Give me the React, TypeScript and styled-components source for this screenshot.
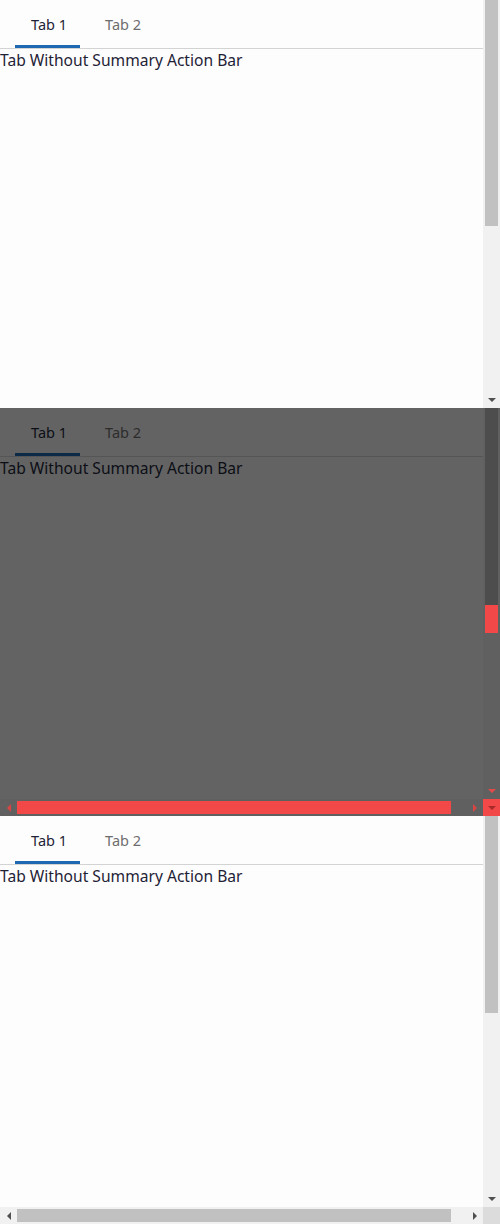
import React from "react";
import styled, { createGlobalStyle, css } from "styled-components";

const Global = createGlobalStyle`
  html, body { margin: 0; padding: 0; background: #fdfdfd; }
  body { font-family: "Noto Sans", "Open Sans", sans-serif; }
  * { box-sizing: border-box; }
`;

type Tone = "light" | "dim";

const palette = {
  light: {
    bg: "#fdfdfd",
    active: "#1f2236",
    inactive: "#6d6d6d",
    underline: "#1f69b3",
    border: "#d3d3d3",
    text: "#1f2236",
    track: "#f1f1f1",
    thumb: "#c1c1c1",
    arrow: "#505050",
    corner: "#dcdcdc",
  },
  dim: {
    bg: "#636363",
    active: "#0c0e16",
    inactive: "#2c2c2c",
    underline: "#0c2a48",
    border: "#555555",
    text: "#0c0e16",
    track: "#606060",
    thumb: "#4d4d4d",
    arrow: "#e24a4a",
    corner: "#f24848",
  },
};

const RED = "#f24848";

const Page = styled.div`
  display: flex;
  flex-direction: column;
  width: 500px;
`;

const Frame = styled.section<{ $tone: Tone; $hbar: boolean }>`
  display: grid;
  grid-template-columns: 483px 17px;
  grid-template-rows: ${(p) => (p.$hbar ? "391px 17px" : "408px")};
  height: 408px;
  background: ${(p) => palette[p.$tone].bg};
`;

const Viewport = styled.div`
  display: flex;
  flex-direction: column;
  overflow: hidden;
`;

const TabList = styled.div<{ $tone: Tone }>`
  display: flex;
  gap: 9px;
  padding-left: 15px;
  border-bottom: 1px solid ${(p) => palette[p.$tone].border};
  height: 49px;
`;

const Tab = styled.div<{ $tone: Tone; $active?: boolean }>`
  display: flex;
  align-items: center;
  justify-content: center;
  height: 48px;
  padding: 3px 13px 0 16px;
  font-size: 14.5px;
  color: ${(p) => (p.$active ? palette[p.$tone].active : palette[p.$tone].inactive)};
  border-bottom: 3px solid
    ${(p) => (p.$active ? palette[p.$tone].underline : "transparent")};
`;

const Body = styled.div<{ $tone: Tone }>`
  font-size: 15.6px;
  line-height: 22px;
  color: ${(p) => palette[p.$tone].text};
  white-space: nowrap;
`;

const VBar = styled.div<{ $tone: Tone }>`
  display: flex;
  flex-direction: column;
  background: ${(p) => palette[p.$tone].track};
`;

const VThumbArea = styled.div`
  flex: 1;
  display: flex;
  flex-direction: column;
  padding: 0 2px;
`;

const Segment = styled.div<{ $color: string; $h: number }>`
  height: ${(p) => p.$h}px;
  flex: none;
  background: ${(p) => p.$color};
`;

const Button = styled.div`
  width: 17px;
  height: 17px;
  flex: none;
  display: flex;
  align-items: center;
  justify-content: center;
`;

const arrowBase = css`
  width: 0;
  height: 0;
`;

const DownArrow = styled.span<{ $color: string }>`
  ${arrowBase};
  border-left: 4px solid transparent;
  border-right: 4px solid transparent;
  border-top: 4px solid ${(p) => p.$color};
  margin-top: 1px;
`;

const LeftArrow = styled.span<{ $color: string }>`
  ${arrowBase};
  border-top: 4px solid transparent;
  border-bottom: 4px solid transparent;
  border-right: 4px solid ${(p) => p.$color};
`;

const RightArrow = styled.span<{ $color: string }>`
  ${arrowBase};
  border-top: 4px solid transparent;
  border-bottom: 4px solid transparent;
  border-left: 4px solid ${(p) => p.$color};
`;

const HBar = styled.div<{ $tone: Tone }>`
  display: flex;
  align-items: center;
  background: ${(p) => palette[p.$tone].track};
`;

const HThumb = styled.div<{ $color: string }>`
  width: 434px;
  height: 13px;
  background: ${(p) => p.$color};
`;

const HSpacer = styled.div`
  flex: 1;
`;

const Corner = styled.div<{ $bg: string }>`
  display: flex;
  align-items: center;
  justify-content: center;
  background: ${(p) => p.$bg};
`;

type PanelProps = {
  tone: Tone;
  hbar: boolean;
  thumb: { color: string; h: number }[];
  red?: boolean;
};

function Panel({ tone, hbar, thumb, red }: PanelProps) {
  const c = palette[tone];
  return (
    <Frame $tone={tone} $hbar={hbar}>
      <Viewport>
        <TabList $tone={tone}>
          <Tab $tone={tone} $active>
            Tab 1
          </Tab>
          <Tab $tone={tone}>Tab 2</Tab>
        </TabList>
        <Body $tone={tone}>Tab Without Summary Action Bar</Body>
      </Viewport>
      <VBar $tone={tone}>
        <VThumbArea>
          {thumb.map((s, i) => (
            <Segment key={i} $color={s.color} $h={s.h} />
          ))}
        </VThumbArea>
        <Button>
          <DownArrow $color={c.arrow} />
        </Button>
      </VBar>
      {hbar && (
        <>
          <HBar $tone={tone}>
            <Button>
              <LeftArrow $color={red ? "#d94545" : c.arrow} />
            </Button>
            <HThumb $color={red ? RED : c.thumb} />
            <HSpacer />
            <Button>
              <RightArrow $color={red ? "#d94545" : c.arrow} />
            </Button>
          </HBar>
          <Corner $bg={red ? RED : c.corner}>
            {red && <DownArrow $color="#a82a2a" />}
          </Corner>
        </>
      )}
    </Frame>
  );
}

export default function App() {
  return (
    <Page>
      <Global />
      <Panel tone="light" hbar={false} thumb={[{ color: palette.light.thumb, h: 226 }]} />
      <Panel
        tone="dim"
        hbar
        red
        thumb={[
          { color: palette.dim.thumb, h: 197 },
          { color: RED, h: 28 },
        ]}
      />
      <Panel tone="light" hbar thumb={[{ color: palette.light.thumb, h: 197 }]} />
    </Page>
  );
}
